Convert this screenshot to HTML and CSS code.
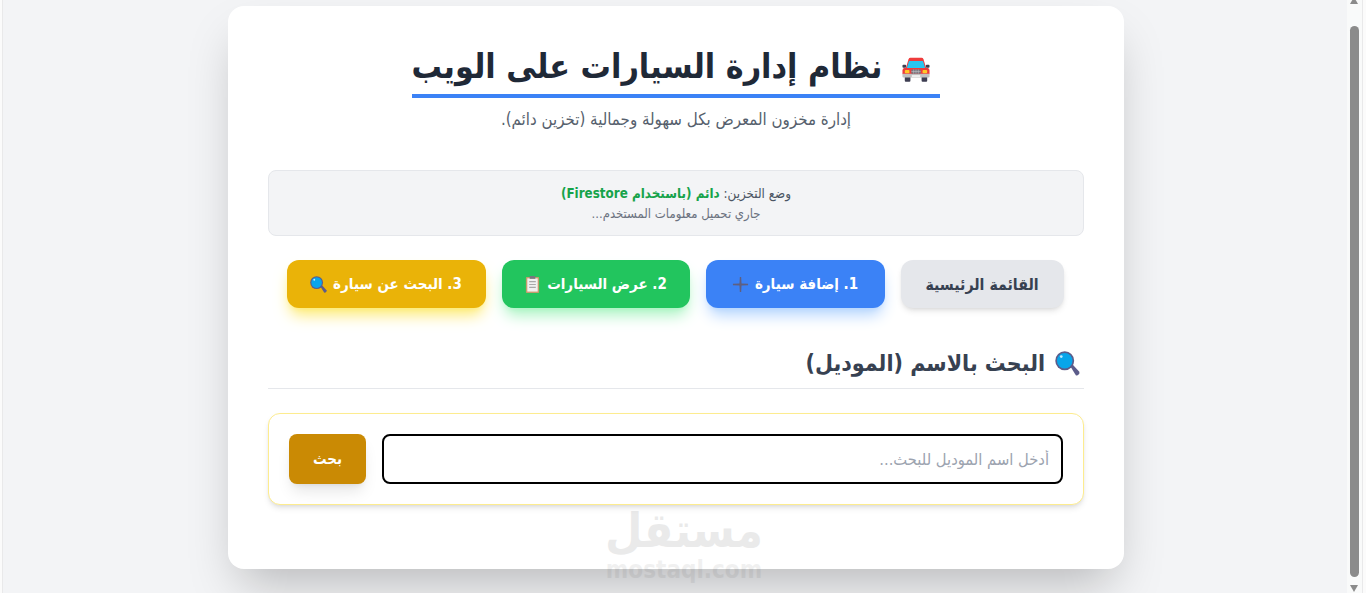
FILE: index.html
```html
<!DOCTYPE html>
<html lang="ar" dir="rtl">
<head>
<meta charset="utf-8">
<title>نظام إدارة السيارات على الويب</title>
<link rel="stylesheet" href="styles.css">
</head>
<body>
<div class="window" dir="ltr">
  <div class="edge"></div>
  <main class="page">
    <section class="card" dir="rtl">
      <header class="head">
        <h1 class="title">
          <svg class="car" viewBox="0 0 30 26" aria-hidden="true">
            <rect x="3" y="20" width="6" height="6" rx="1" fill="#3e3e52"/>
            <rect x="21" y="20" width="6" height="6" rx="1" fill="#3e3e52"/>
            <rect x="0.500" y="8" width="4" height="3" rx="1" fill="#3e3e52"/>
            <rect x="25.500" y="8" width="4" height="3" rx="1" fill="#3e3e52"/>
            <path d="M4 12 7 2Q7.500 .5 9 .5H21Q22.500 .5 23 2L26 12Z" fill="#ef3b3b"/>
            <path d="M5 12 7.500 4H22.500L25 12Z" fill="#29c5f0"/>
            <path d="M2.500 11.500H27.500Q29.500 12 29.500 14V18H.5V14Q.5 12 2.500 11.500Z" fill="#ef3b3b"/>
            <rect x=".5" y="17.500" width="29" height="4" rx="1" fill="#c0c0c0"/>
            <rect x="3" y="13.500" width="5" height="3.500" rx="1" fill="#ffc928"/>
            <rect x="22" y="13.500" width="5" height="3.500" rx="1" fill="#ffc928"/>
            <rect x="10" y="13" width="10" height="4.500" fill="#77777f"/>
            <path d="M10 15.200h10M12.500 13v4.500M15 13v4.500M17.500 13v4.500" stroke="#c4c4c8" stroke-width=".6"/>
            <rect x="10.500" y="19" width="9" height="2" fill="#f1f1f1"/>
          </svg>
          <span class="title-text">نظام إدارة السيارات على الويب</span>
        </h1>
        <p class="subtitle">إدارة مخزون المعرض بكل سهولة وجمالية (تخزين دائم).</p>
      </header>

      <div class="status">
        <p class="status-line">وضع التخزين: <strong class="status-value">دائم (باستخدام Firestore)</strong></p>
        <p class="status-user">جاري تحميل معلومات المستخدم...</p>
      </div>

      <nav class="tabs">
        <button class="tab tab-home" type="button">القائمة الرئيسية</button>
        <button class="tab tab-add" type="button">1. إضافة سيارة
          <svg class="tab-icon" viewBox="0 0 18 18" aria-hidden="true"><path d="M8.300 1h1.400l.400 6.900L17 8.300v1.400l-6.900.400L9.700 17H8.300l-.400-6.900L1 9.700V8.300l6.900-.400Z" fill="#5f5f80"/></svg>
        </button>
        <button class="tab tab-list" type="button">2. عرض السيارات
          <svg class="tab-icon" viewBox="0 0 18 18" aria-hidden="true"><rect x="2" y="1" width="14" height="17" rx="1" fill="#c69c6d"/><rect x="3.500" y="2.500" width="11" height="14" fill="#f1f1f1"/><rect x="6" y="0" width="6" height="3" fill="#77777f"/><path d="M5.500 6h7M5.500 9h7M5.500 12h7" stroke="#a9a9a9" stroke-width="1.200"/></svg>
        </button>
        <button class="tab tab-search" type="button">3. البحث عن سيارة
          <svg class="tab-icon" viewBox="0 0 18 18" aria-hidden="true"><use href="#lens"/></svg>
        </button>
      </nav>

      <h2 class="section-title">
        <svg class="section-icon" viewBox="0 0 18 18" aria-hidden="true">
          <symbol id="lens" viewBox="0 0 18 18">
            <path d="M11 11l1.500-1.500 5 5.500q.5 1-.5 2t-2 .5Z" fill="#5c5c8a"/>
            <circle cx="7" cy="7" r="6.800" fill="#5c5c8a"/>
            <circle cx="7" cy="7" r="5.600" fill="#08a5ea"/>
            <circle cx="4.500" cy="4" r="1" fill="#bfeaff"/>
          </symbol>
          <use href="#lens"/>
        </svg>
        <span>البحث بالاسم (الموديل)</span>
      </h2>

      <form class="search">
        <input class="search-input" type="text" placeholder="أدخل اسم الموديل للبحث...">
        <button class="search-btn" type="button">بحث</button>
      </form>
    </section>
    <div class="watermark" aria-hidden="true">
      <div class="wm-ar">مستقل</div>
      <div class="wm-en">mostaql.com</div>
    </div>
  </main>
  <div class="scrollbar">
    <div class="arrow-up"></div>
    <div class="thumb"></div>
    <div class="arrow-down"></div>
  </div>
  <div class="edge edge-right"></div>
</div>
</body>
</html>
```
FILE: styles.css
```css
* { box-sizing: border-box; }
html, body { margin: 0; height: 593px; overflow: hidden; }
body { background: #f3f4f6; color: #1f2937; font-family: "DejaVu Sans Condensed", "DejaVu Sans", sans-serif; font-stretch: condensed; }
button, input { font-family: inherit; font-stretch: condensed; }
.window { display: flex; height: 593px; }
.edge { width: 3px; background: #fbfbfb; border-right: 1px solid #e9e9ea; }
.edge-right { width: 4px; border-right: 0; border-left: 1px solid #e9e9ea; }
.page { flex: 1; position: relative; padding: 6px 0 0 2px; display: flex; justify-content: center; align-items: flex-start; min-width: 0; }
.card { width: 896px; height: 563px; background: #fff; border-radius: 16px; padding: 40px; box-shadow: 0 25px 50px -12px rgba(0, 0, 0, .25); }
.head { text-align: center; }
.title { display: inline-flex; align-items: center; gap: 20px; height: 52px; margin: 0; font-size: 33.700px; line-height: 44px; font-weight: 800; color: #1f2937; border-bottom: 4px solid #3b82f6; padding: 0 10px 0 0; }
.title-text { margin-bottom: 6px; }
.car { width: 28px; height: 25px; margin-bottom: 2px; }
.subtitle { margin: 8px 0 0; font-size: 16.750px; line-height: 26px; color: #565f6d; }
.status { margin-top: 38px; height: 66px; background: #f3f4f6; border: 1px solid #e5e7eb; border-radius: 8px; text-align: center; padding-top: 12px; }
.status-line { margin: 0; font-size: 13.300px; line-height: 21px; color: #4b5563; }
.status-value { color: #16a34a; font-weight: 700; }
.status-user { margin: 0; font-size: 13px; line-height: 20px; color: #6b7280; }
.tabs { display: flex; justify-content: center; gap: 16px; margin-top: 24px; padding-right: 2px; }
.tab { display: flex; align-items: center; justify-content: center; gap: 6px; height: 48px; border: 0; border-radius: 12px; padding: 0; font-size: 15px; font-weight: 700; color: #fff; }
.tab-icon { width: 17px; height: 17px; }
.tab-home { width: 163px; background: #e5e7eb; color: #374151; font-size: 15.800px; box-shadow: 0 4px 6px -1px rgba(0,0,0,.1), 0 2px 4px -2px rgba(0,0,0,.1); }
.tab-add { width: 179px; background: #3b82f6; box-shadow: 0 10px 15px -3px #b3d4fe, 0 4px 6px -4px #b3d4fe; }
.tab-list { width: 188px; background: #22c55e; box-shadow: 0 10px 15px -3px #a7f3c0, 0 4px 6px -4px #a7f3c0; }
.tab-search { width: 199px; background: #eab308; box-shadow: 0 10px 15px -3px #fdea72, 0 4px 6px -4px #fdea72; }
.section-title { display: flex; align-items: center; gap: 10px; height: 57px; margin: 24px 0 0; padding: 6px 4px 0 0; font-size: 23px; font-weight: 700; color: #374151; border-bottom: 1px solid #e5e7eb; }
.section-icon { width: 25px; height: 25px; }
.search { display: flex; gap: 16px; height: 92px; margin-top: 24px; padding: 20px; background: #fff; border: 1px solid #fdec8f; border-radius: 12px; box-shadow: 0 4px 6px -1px rgba(0,0,0,.1), 0 2px 4px -2px rgba(0,0,0,.1); }
.search-input { flex: 1; height: 50px; border: 2px solid #000; border-radius: 8px; padding: 0 12px; font-size: 16.400px; background: #fff; outline: 0; }
.search-input::placeholder { color: #9ca3af; }
.search-btn { width: 77px; height: 50px; border: 0; border-radius: 8px; background: #ca8a04; color: #fff; font-size: 15px; font-weight: 700; box-shadow: 0 10px 15px -3px rgba(0,0,0,.1), 0 4px 6px -4px rgba(0,0,0,.1); }
.watermark { position: absolute; left: 601px; top: 502px; width: 160px; text-align: center; opacity: .08; color: #000; pointer-events: none; }
.wm-ar { font-size: 48px; line-height: 56px; font-weight: 800; }
.wm-en { font-size: 24px; line-height: 24px; font-weight: 700; opacity: .7; }
.scrollbar { width: 15px; position: relative; background: #f9fafa; }
.thumb { position: absolute; left: 3px; width: 9px; top: 26px; height: 551px; background: #8b8b8b; border-radius: 5px; }
.arrow-up { position: absolute; left: 3px; top: -3px; width: 0; height: 0; border: 4.500px solid transparent; border-top: 0; border-bottom: 7px solid #8b8b8b; }
.arrow-down { position: absolute; left: 3px; top: 585px; width: 0; height: 0; border: 4.500px solid transparent; border-bottom: 0; border-top: 7px solid #8b8b8b; }
```
